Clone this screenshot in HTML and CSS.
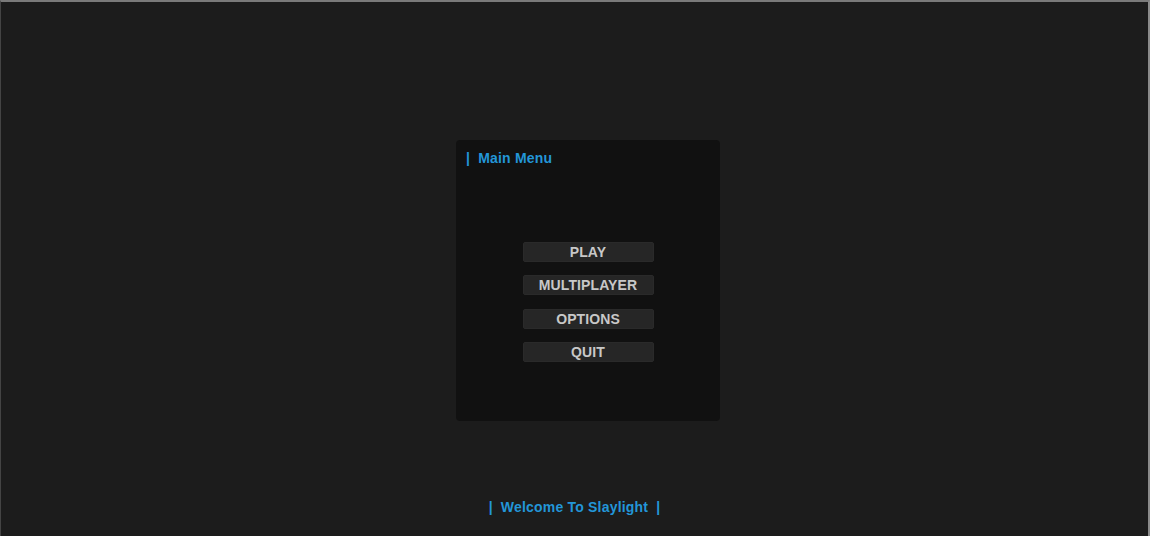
FILE: index.html
```html
<!DOCTYPE html>
<html>
<head>
<meta charset="utf-8">
<link rel="stylesheet" href="styles.css">
</head>
<body>
<div class="screen">
  <div class="panel">
    <div class="panel-title"><span class="bar">|</span>Main Menu</div>
    <div class="menu">
      <button class="menu-btn">PLAY</button>
      <button class="menu-btn">MULTIPLAYER</button>
      <button class="menu-btn">OPTIONS</button>
      <button class="menu-btn">QUIT</button>
    </div>
  </div>
  <div class="footer"><span class="bar">|</span>Welcome To Slaylight<span class="bar right">|</span></div>
</div>
</body>
</html>
```
FILE: styles.css
```css
html, body {
  margin: 0;
  padding: 0;
  height: 100%;
  background: #1c1c1c;
}
body {
  font-family: "Liberation Sans", Arial, sans-serif;
}
.screen {
  box-sizing: border-box;
  height: 536px;
  border-top: 2px solid #7a7a7a;
  border-left: 1px solid #444;
  border-right: 2px solid #8a8a8a;
  display: flex;
  flex-direction: column;
  align-items: center;
}
.panel {
  margin-top: 138px;
  margin-left: 27px;
  box-sizing: border-box;
  width: 264px;
  height: 281px;
  background: #111111;
  border-radius: 4px;
  padding: 10px 10px;
}
.panel-title {
  color: #2396d8;
  font-weight: bold;
  font-size: 14px;
  line-height: 16px;
  letter-spacing: 0.2px;
}
.bar {
  margin-right: 8px;
}
.bar.right {
  margin-right: 0;
  margin-left: 8px;
}
.menu {
  margin-top: 76px;
  display: flex;
  flex-direction: column;
  align-items: center;
  gap: 13.4px;
}
.menu-btn {
  width: 131px;
  height: 20px;
  padding: 0;
  background: #262626;
  border: 1px solid #2a2a2a;
  border-radius: 2px;
  color: #c8c8c8;
  font-family: "Liberation Sans", Arial, sans-serif;
  font-weight: bold;
  font-size: 14px;
  line-height: 18px;
  text-align: center;
  letter-spacing: 0.1px;
}
.footer {
  margin-top: 78px;
  color: #2396d8;
  font-weight: bold;
  font-size: 14px;
  line-height: 16px;
  letter-spacing: 0.2px;
}
```
